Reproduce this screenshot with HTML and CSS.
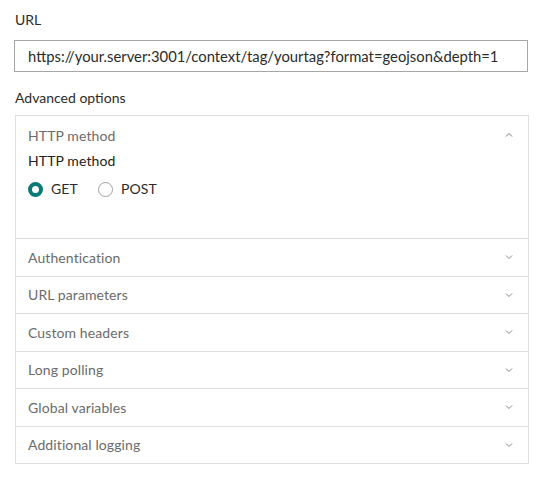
FILE: index.html
```html
<!DOCTYPE html>
<html>
<head>
<meta charset="utf-8">
<link rel="stylesheet" href="styles.css">
</head>
<body>
<div class="form">
  <label class="field-label">URL</label>
  <div class="input">https://your.server:3001/context/tag/yourtag?format=geojson&amp;depth=1</div>
  <div class="field-label adv">Advanced options</div>
  <div class="panel">
    <div class="section open">
      <div class="sec-head">
        <span>HTTP method</span>
        <svg class="chev" width="10" height="10" viewBox="0 0 10 10"><path d="M2 6.5 L5 3.5 L8 6.5" fill="none" stroke="#777" stroke-width="1"/></svg>
      </div>
      <div class="sec-body">
        <div class="sub-label">HTTP method</div>
        <div class="radios">
          <span class="radio checked"></span><span class="rlabel">GET</span>
          <span class="radio"></span><span class="rlabel">POST</span>
        </div>
      </div>
    </div>
    <div class="section"><span>Authentication</span><svg class="chev" width="10" height="10" viewBox="0 0 10 10"><path d="M2 3.5 L5 6.5 L8 3.5" fill="none" stroke="#888" stroke-width="1"/></svg></div>
    <div class="section"><span>URL parameters</span><svg class="chev" width="10" height="10" viewBox="0 0 10 10"><path d="M2 3.5 L5 6.5 L8 3.5" fill="none" stroke="#888" stroke-width="1"/></svg></div>
    <div class="section"><span>Custom headers</span><svg class="chev" width="10" height="10" viewBox="0 0 10 10"><path d="M2 3.5 L5 6.5 L8 3.5" fill="none" stroke="#888" stroke-width="1"/></svg></div>
    <div class="section"><span>Long polling</span><svg class="chev" width="10" height="10" viewBox="0 0 10 10"><path d="M2 3.5 L5 6.5 L8 3.5" fill="none" stroke="#888" stroke-width="1"/></svg></div>
    <div class="section"><span>Global variables</span><svg class="chev" width="10" height="10" viewBox="0 0 10 10"><path d="M2 3.5 L5 6.5 L8 3.5" fill="none" stroke="#888" stroke-width="1"/></svg></div>
    <div class="section last"><span>Additional logging</span><svg class="chev" width="10" height="10" viewBox="0 0 10 10"><path d="M2 3.5 L5 6.5 L8 3.5" fill="none" stroke="#888" stroke-width="1"/></svg></div>
  </div>
</div>
</body>
</html>
```
FILE: styles.css
```css
html, body {
  margin: 0;
  padding: 0;
  background: #ffffff;
}
body {
  font-family: Lato, "Liberation Sans", sans-serif;
  font-size: 14px;
  color: #2b2b2b;
}
.form {
  width: 515px;
  margin-left: 14px;
  padding-top: 10px;
}
.field-label {
  display: block;
  line-height: 20px;
  font-size: 14px;
  color: #2b2b2b;
  margin-left: 1px;
}
.input {
  margin-top: 10px;
  height: 30px;
  border: 1px solid #a6a6a6;
  box-sizing: content-box;
  padding: 0 0 0 13px;
  line-height: 30px;
  font-size: 14.8px;
  color: #2b2b2b;
  width: 499px;
}
.adv {
  margin-top: 16px;
}
.panel {
  margin-top: 7px;
  margin-left: 1px;
  border: 1px solid #dedede;
}
.section {
  display: flex;
  align-items: center;
  justify-content: space-between;
  height: 36.5px;
  padding: 0 12px 0 12px;
  border-bottom: 1px solid #dedede;
  color: #6b6b6b;
  letter-spacing: 0.1px;
}
.section.last {
  border-bottom: none;
}
.section.open {
  display: block;
  height: 122px;
  padding: 0 12px;
}
.sec-head {
  display: flex;
  justify-content: space-between;
  align-items: center;
  height: 20px;
  padding-top: 9px;
  color: #6b6b6b;
}
.chev {
  display: block;
  margin-right: 2px;
}
.sec-body {
  padding-top: 6px;
}
.sub-label {
  line-height: 20px;
  color: #222222;
}
.radios {
  display: flex;
  align-items: center;
  margin-top: 10px;
  color: #2b2b2b;
}
.radio {
  display: inline-block;
  width: 15px;
  height: 15px;
  border-radius: 50%;
  border: 1px solid #a0a0a0;
  box-sizing: border-box;
  margin-left: 0;
  margin-right: 8px;
}
.radio.checked {
  border: 4px solid #0a7a78;
}
.rlabel {
  line-height: 16px;
  margin-right: 20px;
}
```
